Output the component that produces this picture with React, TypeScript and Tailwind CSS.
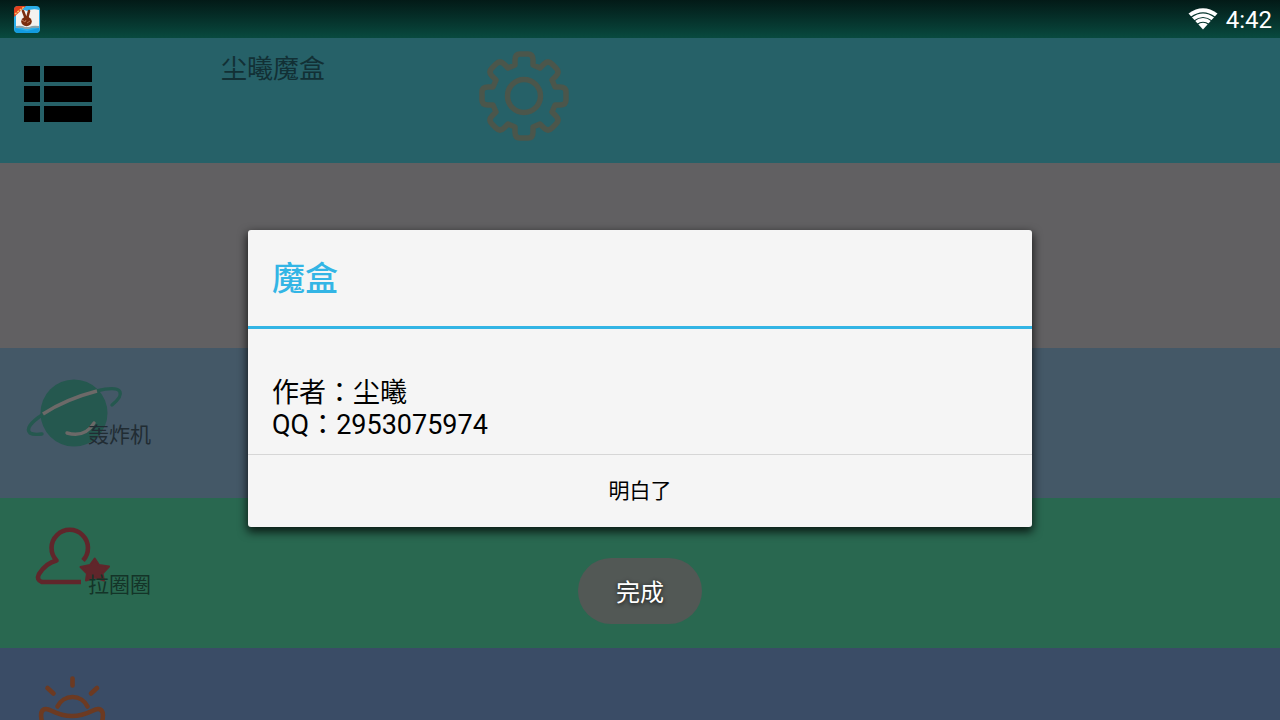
import type { ReactNode } from "react";

interface ToolRowProps {
  label?: string;
  className: string;
  labelClassName?: string;
  children: ReactNode;
}

function AppBadge() {
  return (
    <svg className="w-[26px] h-[27px]" viewBox="0 0 26 27" aria-hidden="true">
      <rect width="26" height="27" rx="4" fill="#2aaeea" />
      <path d="M1 22l12 3 12-3v2q0 3-4 3H5q-4 0-4-3z" fill="#129be0" />
      <path d="M2 5q6-3 11 0 6-3 12-1v17q-7-1-10 1h-4q-4-2-9-1z" fill="#f4f2ef" />
      <path d="M2 20q6-1 9 1h4q4-2 10-1v2q-7-1-10 1h-4q-3-2-9-1z" fill="#8fa3a8" />
      <path d="M0 4q0-4 4-4h8L0 11z" fill="#e2401c" />
      <path d="M1 8L10 1" stroke="#f7c96a" strokeWidth="1.5" strokeDasharray="2 1" />
      <path d="M9 5l3 8M15 5l-2 8" stroke="#7b2d0e" strokeWidth="2.6" strokeLinecap="round" />
      <ellipse cx="12.5" cy="15.5" rx="5.3" ry="4.7" fill="#7b2d0e" />
      <path d="M8 14l3 2 1-2M13 17l3-2" stroke="#c78567" strokeWidth="0.8" fill="none" />
    </svg>
  );
}

function WifiIcon() {
  return (
    <svg className="w-[30px] h-[22px]" viewBox="0 0 30 22" aria-hidden="true">
      <path d="M0.500 5.500Q15-5 29.500 5.500L15 21.500z" fill="#fff" />
      <g fill="none" stroke="#06362e" strokeWidth="1.200">
        <path d="M3 9.300Q15 0.500 27 9.300" />
        <path d="M6 13Q15 6 24 13" />
        <path d="M9 16.500Q15 12 21 16.500" />
      </g>
    </svg>
  );
}

function StatusBar() {
  return (
    <div className="flex h-[38px] shrink-0 items-center justify-between bg-linear-to-b from-[#031a17] to-[#084a3f] pl-3.5 pr-2">
      <AppBadge />
      <div className="flex items-center gap-2">
        <WifiIcon />
        <span className="pt-0.5 text-2xl leading-8 text-white">4:42</span>
      </div>
    </div>
  );
}

function ListIcon() {
  return (
    <svg className="w-[68px] h-14" viewBox="0 0 68 56" aria-hidden="true">
      <path d="M0 0h16v16H0zM20 0h48v16H20zM0 20h16v16H0zM20 20h48v16H20zM0 40h16v16H0zM20 40h48v16H20z" />
    </svg>
  );
}

function GearIcon() {
  return (
    <svg className="size-[90px]" viewBox="-45 -45 90 90" fill="none" stroke="#4b564b" strokeWidth="5.500" aria-hidden="true">
      <circle r="16.500" />
      <path
        strokeLinejoin="round"
        d="M-9-31V-36Q-9-42-4-42H4Q9-42 9-36V-31L16-28L20-32Q24-36 28-32L32-28Q36-24 32-20L28-16L31-9H36Q42-9 42-4V4Q42 9 36 9H31L28 16L32 20Q36 24 32 28L28 32Q24 36 20 32L16 28L9 31V36Q9 42 4 42H-4Q-9 42-9 36V31L-16 28L-20 32Q-24 36-28 32L-32 28Q-36 24-32 20L-28 16L-31 9H-36Q-42 9-42 4V-4Q-42-9-36-9H-31L-28-16L-32-20Q-36-24-32-28L-28-32Q-24-36-20-32L-16-28Z"
      />
    </svg>
  );
}

function PlanetIcon() {
  return (
    <svg className="w-36 h-[150px]" viewBox="0 0 144 150" fill="none" strokeLinecap="round" aria-hidden="true">
      <circle cx="74" cy="65" r="33.500" fill="#25584f" />
      <path d="M42 67Q24 79 30 85Q33 87 42 86M97 43Q117 38 120 44Q122 49 112 57" stroke="#25584f" strokeWidth="3.400" />
      <path d="M43 66Q66 51 97 43" stroke="#6c6968" strokeWidth="3.400" strokeLinecap="butt" />
      <path d="M67 85Q85 90 94 75" stroke="#6c6968" strokeWidth="3.400" />
    </svg>
  );
}

function UserStarIcon() {
  return (
    <svg className="w-36 h-[150px]" viewBox="0 0 144 150" aria-hidden="true">
      <path
        d="M81 84H42Q36 82 39 76Q46 65 56.500 62.500A18.200 18.200 0 1 1 83 62.500"
        fill="none"
        stroke="#60262b"
        strokeWidth="4.600"
        strokeLinejoin="round"
      />
      <path
        d="M94.700 60.500L99 67L109 68.500L102.500 75.500L104 82.500L94.700 79.500L86 82.500L87 75.500L80.500 69L90 67Z"
        fill="#60262b"
        stroke="#60262b"
        strokeWidth="2"
        strokeLinejoin="round"
      />
    </svg>
  );
}

function SunriseIcon() {
  return (
    <svg className="w-36 h-[150px]" viewBox="0 0 144 150" fill="none" stroke="#6c3a22" strokeWidth="4.600" strokeLinecap="round" aria-hidden="true">
      <path d="M72.500 30.500v7M47.500 40l6 5.500M97 40l-6 5.500" />
      <path d="M57.500 58.500A16.600 16.600 0 0 1 87.500 58.500" />
      <path d="M42 74Q39 61 46 61Q48 61 52 63Q72 73 92 63Q96 61 98 61Q105 61 102 74Q94 92 72 92Q48 92 42 74Z" />
    </svg>
  );
}

function ToolRow({ label, className, labelClassName, children }: ToolRowProps) {
  return (
    <button type="button" className={`relative block h-[150px] w-full shrink-0 text-left ${className}`}>
      {children}
      {label && (
        <span className={`absolute top-[71px] left-[88px] text-[21px] leading-8 ${labelClassName}`}>
          {label}
        </span>
      )}
    </button>
  );
}

function AboutDialog() {
  return (
    <div className="absolute inset-x-0 top-9 bottom-0 flex items-center justify-center">
      <div
        role="dialog"
        aria-labelledby="about-title"
        className="w-[784px] max-w-[90%] overflow-hidden rounded-[3px] bg-[#f5f5f5] text-black shadow-[0_4px_10px_1px_rgba(0,0,0,0.75)]"
      >
        <h2
          id="about-title"
          className="flex h-[99px] items-center border-b-3 border-[#33b5e5] px-6 pt-0.5 text-[33px] leading-10 font-medium text-[#33b5e5]"
        >
          魔盒
        </h2>
        <p className="px-6 pt-12 pb-[13px] font-['Roboto','Noto_Sans_CJK_TC',sans-serif] text-[27px] leading-8">
          作者：尘曦
          <br />
          QQ：2953075974
        </p>
        <button type="button" className="block h-[73px] w-full border-t border-[#d6d6d6] pt-0.5 text-[21px]">
          明白了
        </button>
      </div>
    </div>
  );
}

export default function App() {
  return (
    <div className="relative flex h-screen flex-col overflow-hidden bg-[#3a4c66] font-['Roboto','Noto_Sans_CJK_SC',sans-serif]">
      <StatusBar />
      <header className="flex h-[125px] shrink-0 items-start bg-[#266168]">
        <button type="button" aria-label="菜单" className="mt-7 ml-6">
          <ListIcon />
        </button>
        <h1 className="mt-[15px] ml-[129px] text-[26px] leading-8 text-[#123035]">尘曦魔盒</h1>
        <button type="button" aria-label="设置" className="mt-[13px] ml-[154px]">
          <GearIcon />
        </button>
      </header>
      <div className="h-[185px] shrink-0 bg-[#616062]" />
      <main className="flex flex-col">
        <ToolRow label="轰炸机" className="bg-[#445867]" labelClassName="text-[#212c33]">
          <PlanetIcon />
        </ToolRow>
        <ToolRow label="拉圈圈" className="bg-[#296850]" labelClassName="text-[#143428]">
          <UserStarIcon />
        </ToolRow>
        <ToolRow className="bg-[#3a4c66]">
          <SunriseIcon />
        </ToolRow>
      </main>
      <AboutDialog />
      <div
        role="status"
        className="absolute bottom-24 left-1/2 flex h-[66px] -translate-x-1/2 items-center rounded-full bg-[#525855] px-[38px] pt-1 text-2xl whitespace-nowrap text-white [text-shadow:0_1px_4px_rgba(0,0,0,0.8)]"
      >
        完成
      </div>
    </div>
  );
}
